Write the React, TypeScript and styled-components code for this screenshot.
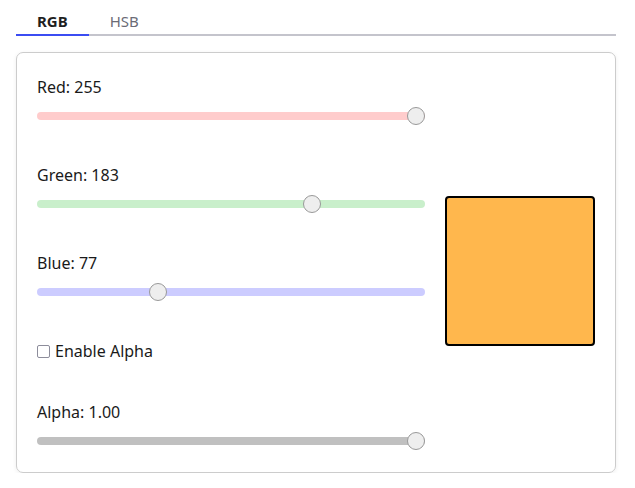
import React, { useState } from 'react';
import styled, { createGlobalStyle, css } from 'styled-components';

const GlobalStyle = createGlobalStyle`
  body {
    margin: 0;
    background: #ffffff;
    font-family: 'Noto Sans', 'Open Sans', sans-serif;
    color: #1a1a1a;
  }
`;

const Page = styled.div`
  width: 600px;
  margin-left: 16px;
`;

const TabList = styled.div`
  display: flex;
  border-bottom: 2px solid #c4c4cc;
`;

const Tab = styled.button`
  font-family: inherit;
  font-size: 15px;
  line-height: 20px;
  padding: 11px 21px 3px;
  margin: 0 0 -2px;
  background: none;
  border: none;
  border-bottom: 2px solid transparent;
  color: #6b6b76;
  cursor: pointer;

  ${({ $active }) =>
    $active &&
    css`
      font-weight: 700;
      color: #1f1f1f;
      border-bottom-color: #3b4cf2;
    `};
`;

const Card = styled.div`
  margin-top: 16px;
  border: 1px solid #cccccc;
  border-radius: 7px;
  box-shadow: 0 1px 4px rgba(0, 0, 0, 0.07);
  padding: 23px 20px 22px;
  display: flex;
  align-items: center;
  gap: 20px;
`;

const Controls = styled.div`
  width: 388px;
  display: flex;
  flex-direction: column;
  gap: 39px;
`;

const Group = styled.div`
  display: flex;
  flex-direction: column;
  gap: 9px;
`;

const Label = styled.label`
  font-size: 16px;
  line-height: 22px;
  display: flex;
  align-items: center;
`;

const Range = styled.input.attrs({ type: 'range' })`
  -webkit-appearance: none;
  appearance: none;
  width: 388px;
  height: 18px;
  margin: 0;
  background: transparent;
  display: block;

  &::-webkit-slider-runnable-track {
    height: 8px;
    border-radius: 4px;
    background: ${({ $track }) => $track};
  }

  &::-webkit-slider-thumb {
    -webkit-appearance: none;
    width: 18px;
    height: 18px;
    margin-top: -5px;
    border-radius: 50%;
    background: #eeeeee;
    border: 1px solid #999999;
    box-sizing: border-box;
  }
`;

const Check = styled.input.attrs({ type: 'checkbox' })`
  -webkit-appearance: none;
  appearance: none;
  width: 13px;
  height: 13px;
  margin: 0 5px 0 0;
  border: 1.5px solid #8d8d9b;
  border-radius: 2px;
  box-sizing: border-box;
  background: #ffffff;

  &:checked {
    background: #3b4cf2;
    border-color: #3b4cf2;
  }
`;

const Swatch = styled.div`
  width: 150px;
  height: 150px;
  box-sizing: border-box;
  border: 2px solid #000000;
  border-radius: 4px;
  margin-top: 16px;
  flex-shrink: 0;
`;

export default function App() {
  const [mode, setMode] = useState('RGB');
  const [r, setR] = useState(255);
  const [g, setG] = useState(183);
  const [b, setB] = useState(77);
  const [alphaOn, setAlphaOn] = useState(false);
  const [alpha, setAlpha] = useState(1);

  const sliders = [
    { name: 'Red', value: r, set: setR, track: '#ffcccc' },
    { name: 'Green', value: g, set: setG, track: '#c9efcb' },
    { name: 'Blue', value: b, set: setB, track: '#ccccff' },
  ];

  return (
    <>
      <GlobalStyle />
      <Page>
        <TabList>
          {['RGB', 'HSB'].map((t) => (
            <Tab key={t} $active={mode === t} onClick={() => setMode(t)}>
              {t}
            </Tab>
          ))}
        </TabList>
        <Card>
          <Controls>
            {sliders.map((s) => (
              <Group key={s.name}>
                <Label>
                  {s.name}: {s.value}
                </Label>
                <Range
                  min={0}
                  max={255}
                  value={s.value}
                  $track={s.track}
                  onChange={(e) => s.set(Number(e.target.value))}
                />
              </Group>
            ))}
            <Label>
              <Check checked={alphaOn} onChange={(e) => setAlphaOn(e.target.checked)} />
              Enable Alpha
            </Label>
            <Group>
              <Label>Alpha: {alpha.toFixed(2)}</Label>
              <Range
                min={0}
                max={1}
                step={0.01}
                value={alpha}
                $track="#c0c0c0"
                onChange={(e) => setAlpha(Number(e.target.value))}
              />
            </Group>
          </Controls>
          <Swatch
            style={{
              background: `rgba(${r}, ${g}, ${b}, ${alphaOn ? alpha : 1})`,
            }}
          />
        </Card>
      </Page>
    </>
  );
}
